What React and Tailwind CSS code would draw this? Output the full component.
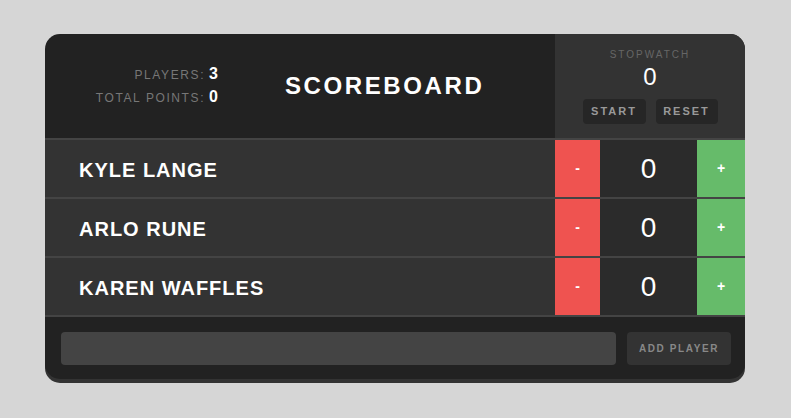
import React, { useState } from "react";

const PLAYERS = [
  { id: 1, name: "Kyle Lange", score: 0 },
  { id: 2, name: "Arlo Rune", score: 0 },
  { id: 3, name: "Karen Waffles", score: 0 },
];

function Stats({ players }) {
  const total = players.reduce((sum, p) => sum + p.score, 0);
  return (
    <div className="w-[173px] text-right">
      <div className="leading-[22px]">
        <span className="text-[12px] tracking-[1.6px] text-[#777]">PLAYERS:</span>
        <span className="ml-1 text-[16px] font-bold text-white">{players.length}</span>
      </div>
      <div className="leading-[22px]">
        <span className="text-[12px] tracking-[1.6px] text-[#777]">TOTAL POINTS:</span>
        <span className="ml-1 text-[16px] font-bold text-white">{total}</span>
      </div>
    </div>
  );
}

function Stopwatch() {
  return (
    <div className="flex w-[190px] flex-col items-center bg-[#333] pt-[15px]">
      <p className="text-[10px] leading-[12px] tracking-[2px] text-[#666]">STOPWATCH</p>
      <p className="mt-[2px] text-[24px] leading-[28px] text-white">0</p>
      <div className="mt-[8px] flex gap-[10px]">
        <button className="h-[25px] w-[63px] rounded-[4px] bg-[#262626] text-[11px] font-bold tracking-[2px] text-[#999]">
          START
        </button>
        <button className="h-[25px] w-[62px] rounded-[4px] bg-[#262626] text-[11px] font-bold tracking-[2px] text-[#999]">
          RESET
        </button>
      </div>
    </div>
  );
}

function PlayerRow({ player, onChange }) {
  return (
    <div className="flex h-[59px] border-b-2 border-[#444] bg-[#333]">
      <div className="flex flex-1 items-center pl-[34px] pt-[2px] text-[20px] font-bold uppercase tracking-[1px] text-white">
        {player.name}
      </div>
      <button
        onClick={() => onChange(player.id, -1)}
        className="w-[45px] bg-[#ef5350] text-[14px] font-bold text-white"
      >
        -
      </button>
      <div className="flex w-[97px] items-center justify-center bg-[#2b2b2b] text-[28px] text-white">
        {player.score}
      </div>
      <button
        onClick={() => onChange(player.id, 1)}
        className="w-[48px] bg-[#66bb6a] text-[14px] font-bold text-white"
      >
        +
      </button>
    </div>
  );
}

export default function App() {
  const [players, setPlayers] = useState(PLAYERS);

  const changeScore = (id, delta) => {
    setPlayers(players.map(p => (p.id === id ? { ...p, score: p.score + delta } : p)));
  };

  return (
    <div className="min-h-[418px] bg-[#d6d6d6] pt-[34px] pl-[45px] font-['Liberation_Sans',Arial,sans-serif]">
      <div className="w-[700px] overflow-hidden rounded-[15px] bg-[#222] shadow-[0_4px_0_#333]">
        {/* Header */}
        <div className="flex h-[106px] border-b-2 border-[#444]">
          <div className="flex flex-1 items-center">
            <Stats players={players} />
            <h1 className="ml-[67px] text-[24px] font-bold tracking-[2.6px] text-white">SCOREBOARD</h1>
          </div>
          <Stopwatch />
        </div>

        {/* Players */}
        {players.map(p => (
          <PlayerRow key={p.id} player={p} onChange={changeScore} />
        ))}

        {/* Add player form */}
        <form className="flex h-[62px] items-center gap-[11px] pl-[16px] pr-[14px]" onSubmit={e => e.preventDefault()}>
          <input className="h-[33px] flex-1 rounded-[4px] bg-[#444] px-3 text-white outline-none" type="text" />
          <button className="h-[33px] w-[104px] rounded-[4px] bg-[#333] text-[10px] font-bold tracking-[1.6px] text-[#888]">
            ADD PLAYER
          </button>
        </form>
      </div>
    </div>
  );
}
